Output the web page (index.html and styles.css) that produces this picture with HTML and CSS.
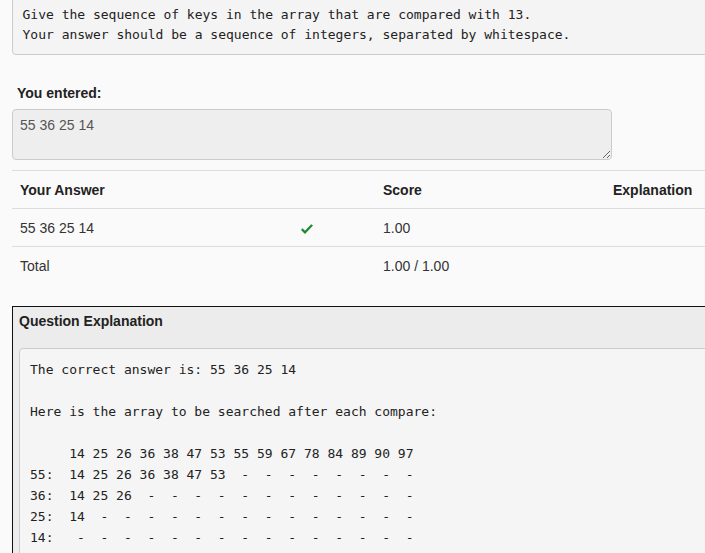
FILE: index.html
```
<!DOCTYPE html>
<html>
<head>
<meta charset="utf-8">
<link rel="stylesheet" href="styles.css">
</head>
<body>
<div class="page">
  <pre class="prompt">Give the sequence of keys in the array that are compared with 13.
Your answer should be a sequence of integers, separated by whitespace.</pre>

  <div class="entered-label">You entered:</div>
  <textarea class="entered" readonly>55 36 25 14</textarea>

  <table class="results">
    <colgroup>
      <col class="c-answer"><col class="c-mark"><col class="c-score"><col class="c-expl">
    </colgroup>
    <thead>
      <tr><th>Your Answer</th><th></th><th>Score</th><th>Explanation</th></tr>
    </thead>
    <tbody>
      <tr>
        <td>55 36 25 14</td>
        <td><svg class="check" width="14" height="11" viewBox="0 0 14 11"><path d="M1 6 L5 10 L13 1.5 L11.2 0.2 L5 6.8 L2.6 4.3 Z" fill="#1f8a2c"/></svg></td>
        <td>1.00</td>
        <td></td>
      </tr>
      <tr>
        <td>Total</td>
        <td></td>
        <td>1.00 / 1.00</td>
        <td></td>
      </tr>
    </tbody>
  </table>

  <div class="panel">
    <div class="panel-title">Question Explanation</div>
    <pre class="explain">The correct answer is: 55 36 25 14

Here is the array to be searched after each compare:

     14 25 26 36 38 47 53 55 59 67 78 84 89 90 97
55:  14 25 26 36 38 47 53  -  -  -  -  -  -  -  -
36:  14 25 26  -  -  -  -  -  -  -  -  -  -  -  -
25:  14  -  -  -  -  -  -  -  -  -  -  -  -  -  -
14:   -  -  -  -  -  -  -  -  -  -  -  -  -  -  -
</pre>
  </div>
</div>
</body>
</html>
```
FILE: styles.css
```
html, body {
  margin: 0;
  padding: 0;
  overflow: hidden;
  background: #fafafa;
}
body {
  font-family: "Liberation Sans", Arial, sans-serif;
  font-size: 14px;
  color: #333;
}
.page {
  width: 1000px;
  padding-left: 12px;
}
.prompt {
  margin: -6px 0 0 0;
  padding: 9.5px;
  background: #f4f4f4;
  border: 1px solid #ccc;
  border-radius: 4px;
  font-family: "DejaVu Sans Mono", monospace;
  font-size: 13px;
  line-height: 20px;
  color: #222;
  white-space: pre;
}
.entered-label {
  margin-top: 28px;
  padding-left: 5px;
  font-weight: bold;
  line-height: 20px;
  color: #222;
}
.entered {
  display: block;
  box-sizing: border-box;
  margin: 6px 0 0 0;
  width: 600px;
  height: 51px;
  padding: 5px 7px;
  background: #eeeeee;
  border: 1px solid #cccccc;
  border-radius: 4px;
  font-family: "Liberation Sans", Arial, sans-serif;
  font-size: 14px;
  line-height: 20px;
  color: #555;
  resize: vertical;
}
.results {
  margin-top: 10px;
  margin-bottom: 22px;
  border-collapse: collapse;
  table-layout: fixed;
  width: 893px;
}
.c-answer { width: 280px; }
.c-mark { width: 83px; }
.c-score { width: 230px; }
.c-expl { width: 300px; }
.results th,
.results td {
  padding: 9px 8px 7px 8px;
  line-height: 21px;
  text-align: left;
  vertical-align: top;
  border-top: 1px solid #dddddd;
}
.results th {
  font-weight: bold;
  color: #222;
}
.results td {
  color: #333;
}
.check {
  display: block;
  margin-top: 6px;
}
.panel {
  background: #ececec;
  border: 1px solid #111;
  padding: 4px 6px 0 6px;
}
.panel-title {
  font-weight: bold;
  line-height: 20px;
  color: #222;
  margin-bottom: 17px;
}
.explain {
  margin: 0;
  padding: 9.5px 10px;
  background: #f5f5f5;
  border: 1px solid #cccccc;
  border-radius: 4px;
  font-family: "DejaVu Sans Mono", monospace;
  font-size: 13px;
  line-height: 21px;
  color: #222;
}
```
